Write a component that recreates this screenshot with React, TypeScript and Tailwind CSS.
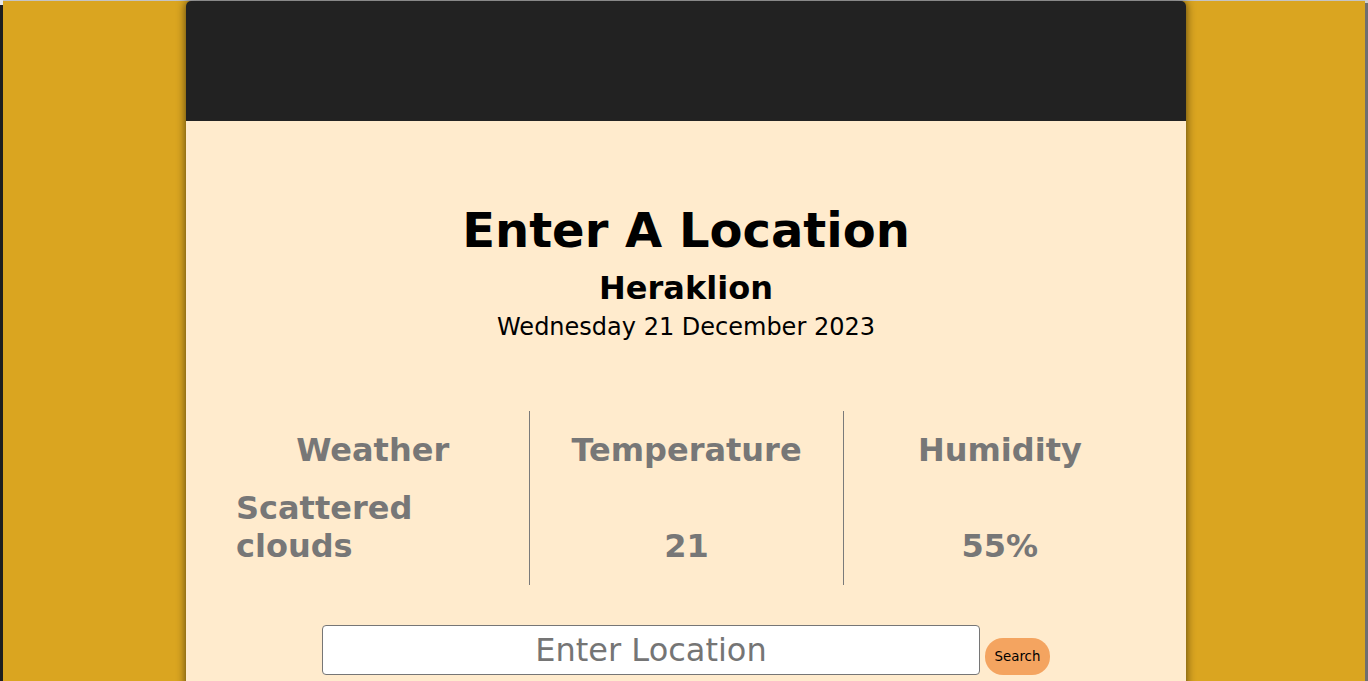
import React from "react";

export default function App() {
  return (
    <div className="flex min-h-[681px] bg-[#DAA520] font-['DejaVu_Sans',sans-serif] overflow-hidden">
      <div className="w-[3px] shrink-0 flex flex-col">
        <div className="h-[5px] bg-[#e8e8e8]" />
        <div className="flex-1 bg-[#1e1e1e]" />
      </div>
      <div className="flex-1 flex flex-col">
        <div className="h-px bg-[#c4c4c4]" />
        <div className="flex pl-[183px]">
          <div className="w-[1000px] rounded-t-[5px] overflow-hidden shadow-[0_0_10px_rgba(0,0,0,0.65)]">
            <div className="h-[120px] bg-[#222222]" />
            <div className="bg-[#FFEBCD] px-[30px] pt-[81px] pb-10 flex flex-col items-center">
              <h1 className="text-[48px] font-bold leading-[56px] text-black">Enter A Location</h1>
              <h2 className="mt-[12px] text-[32px] font-bold leading-[37px] text-black">Heraklion</h2>
              <p className="mt-[6px] text-[24px] leading-[28px] text-black">Wednesday 21 December 2023</p>

              <div className="mt-[70px] grid grid-cols-3 w-full text-[#777777]">
                <div className="p-5 flex flex-col items-center justify-between">
                  <div className="text-[32px] font-bold leading-[38px] text-center">Weather</div>
                  <div className="mt-5 text-[32px] font-bold leading-[38px]">Scattered clouds</div>
                </div>
                <div className="p-5 flex flex-col items-center justify-between border-l border-[#7a7a7a]">
                  <div className="text-[32px] font-bold leading-[38px] text-center">Temperature</div>
                  <div className="mt-5 text-[32px] font-bold leading-[38px]">21</div>
                </div>
                <div className="p-5 flex flex-col items-center justify-between border-l border-[#7a7a7a]">
                  <div className="text-[32px] font-bold leading-[38px] text-center">Humidity</div>
                  <div className="mt-5 text-[32px] font-bold leading-[38px]">55%</div>
                </div>
              </div>

              <div className="mt-10 flex items-end justify-center gap-[5px]">
                <input
                  type="text"
                  placeholder="Enter Location"
                  className="w-[658px] h-[50px] border border-[#767676] rounded-[4px] bg-white text-[32px] text-center text-black placeholder:text-[#757575] outline-none font-['DejaVu_Sans',sans-serif]"
                />
                <button className="w-[65px] h-[37px] rounded-[18px] bg-[#F4A460] text-[13.33px] text-black font-['DejaVu_Sans',sans-serif]">
                  Search
                </button>
              </div>
            </div>
          </div>
        </div>
      </div>
      <div className="w-[3px] shrink-0 flex flex-col">
        <div className="h-[3px] bg-[#d0d0d0]" />
        <div className="flex-1 bg-[#6f6f6f]" />
      </div>
    </div>
  );
}
